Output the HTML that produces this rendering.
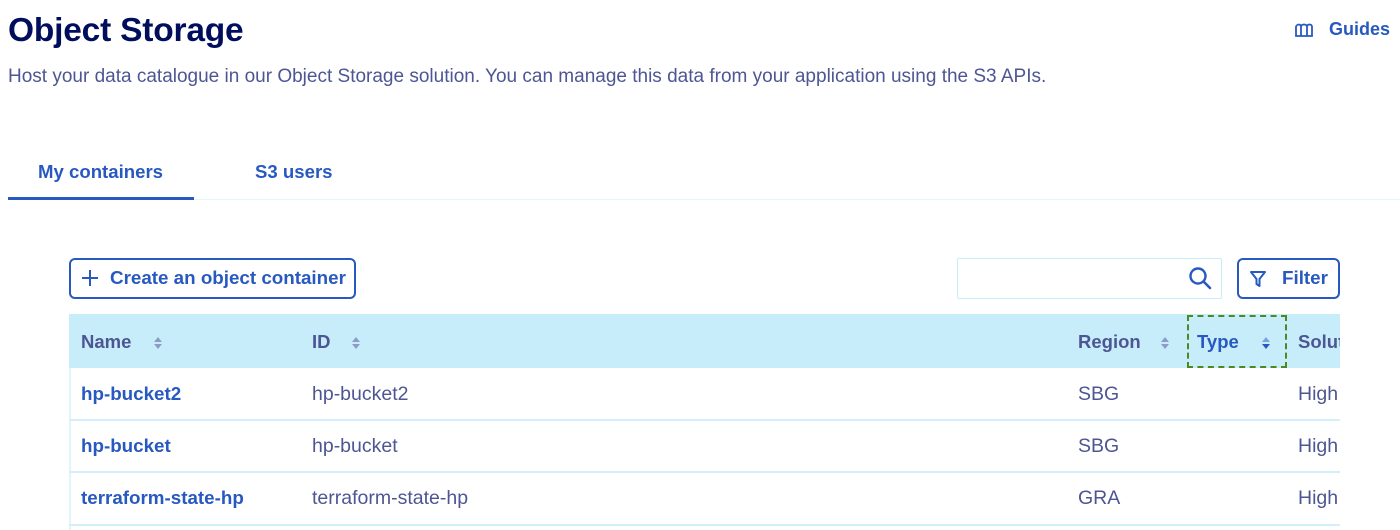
<!DOCTYPE html>
<html><head><meta charset="utf-8"><style>
*{margin:0;padding:0;box-sizing:border-box}
body{width:1400px;height:530px;background:#fff;font-family:"Liberation Sans",sans-serif;position:relative;overflow:hidden;color:#4d5693}
.a{position:absolute;white-space:nowrap}
h1{position:absolute;left:8px;top:12px;font-size:33.5px;font-weight:bold;color:#000e5c;letter-spacing:-0.2px}
.sub{left:8px;top:66px;font-size:19px;color:#4d5693}
.blue{color:#2859c0}
.tab{font-size:18.6px;font-weight:bold;color:#2859c0;top:161px}
.btn{border:2px solid #2859c0;border-radius:6px;background:#fff}
.th{font-size:18.5px;font-weight:bold;color:#4d5693;top:331px}
.td{font-size:19.5px;top:383px}
.td.blue{font-size:18.8px}
.sort{position:absolute;width:10px;height:16px}
</style></head><body>
<h1>Object Storage</h1>
<div class="a sub">Host your data catalogue in our Object Storage solution. You can manage this data from your application using the S3 APIs.</div>
<svg class="a" style="left:1295px;top:22px" width="18" height="16" viewBox="0 0 18 16"><path d="M1 4v10h16V4M1 4c2-2 4-2 5 0 1-2 5-2 6 0 1-2 4-2 5 0M6 4v10M12 4v10" fill="none" stroke="#2859c0" stroke-width="1.8"/></svg>
<div class="a blue" style="left:1329px;top:19px;font-size:18px;font-weight:bold">Guides</div>

<div class="a tab" style="left:38px">My containers</div>
<div class="a tab" style="left:255px">S3 users</div>
<div class="a" style="left:8px;top:199px;width:1392px;height:1px;background:#e6f4fb"></div>
<div class="a" style="left:8px;top:197px;width:186px;height:3px;background:#2859c0"></div>

<div class="a btn" style="left:69px;top:258px;width:287px;height:41px"></div>
<svg class="a" style="left:81px;top:269px" width="18" height="18"><path d="M9 1v16M1 9h16" stroke="#2859c0" stroke-width="2"/></svg>
<div class="a blue" style="left:110px;top:267px;font-size:18.8px;font-weight:bold">Create an object container</div>

<div class="a" style="left:957px;top:258px;width:265px;height:41px;border:1px solid #c8ecfa;border-radius:2px"></div>
<svg class="a" style="left:1188px;top:266px" width="26" height="26"><circle cx="10" cy="10" r="7.5" fill="none" stroke="#2859c0" stroke-width="2.4"/><path d="M15.5 15.5L22 22" stroke="#2859c0" stroke-width="2.6" stroke-linecap="round"/></svg>
<div class="a btn" style="left:1237px;top:258px;width:103px;height:41px"></div>
<svg class="a" style="left:1249px;top:270px" width="18" height="18"><path d="M2 2h14l-5.5 7v7l-3-2V9z" fill="none" stroke="#2859c0" stroke-width="2" stroke-linejoin="round"/></svg>
<div class="a blue" style="left:1282px;top:267px;font-size:18.8px;font-weight:bold">Filter</div>

<div class="a" style="left:69px;top:314px;width:1271px;height:54px;background:#c7edfb"></div>
<div class="a" style="left:69px;top:368px;width:2px;height:162px;background:#e0f4fc"></div>
<div class="a" style="left:69px;top:419px;width:1271px;height:2px;background:#d2effb"></div>
<div class="a" style="left:69px;top:471px;width:1271px;height:2px;background:#d2effb"></div>
<div class="a" style="left:69px;top:524px;width:1271px;height:2px;background:#d2effb"></div>

<div class="a th" style="left:81px">Name</div>
<div class="a th" style="left:312px">ID</div>
<div class="a th" style="left:1078px">Region</div>
<div class="a th" style="left:1197px;color:#2859c0">Type</div>
<div class="a th" style="left:1298px;width:42px;overflow:hidden">Solution</div>
<svg class="sort" style="left:153px;top:335px" viewBox="0 0 10 16"><path d="M1 7L5 2 9 7zM1 9l4 5 4-5z" fill="#8e9bc6"/></svg>
<svg class="sort" style="left:351px;top:335px" viewBox="0 0 10 16"><path d="M1 7L5 2 9 7zM1 9l4 5 4-5z" fill="#8e9bc6"/></svg>
<svg class="sort" style="left:1160px;top:335px" viewBox="0 0 10 16"><path d="M1 7L5 2 9 7zM1 9l4 5 4-5z" fill="#8e9bc6"/></svg>
<svg class="sort" style="left:1261px;top:335px" viewBox="0 0 10 16"><path d="M1 7L5 2 9 7z" fill="#7ea0e0"/><path d="M1 9l4 5 4-5z" fill="#2859c0"/></svg>
<div class="a" style="left:1187px;top:315px;width:100px;height:53px;border:2px dashed #4a8a1e"></div>

<div class="a td blue" style="font-weight:bold;left:81px">hp-bucket2</div>
<div class="a td" style="left:312px">hp-bucket2</div>
<div class="a td" style="left:1078px">SBG</div>
<div class="a td" style="left:1298px;width:42px;overflow:hidden">High</div>
<div class="a td blue" style="font-weight:bold;left:81px;top:435px">hp-bucket</div>
<div class="a td" style="left:312px;top:435px">hp-bucket</div>
<div class="a td" style="left:1078px;top:435px">SBG</div>
<div class="a td" style="left:1298px;top:435px;width:42px;overflow:hidden">High</div>
<div class="a td blue" style="font-weight:bold;left:81px;top:487px">terraform-state-hp</div>
<div class="a td" style="left:312px;top:487px">terraform-state-hp</div>
<div class="a td" style="left:1078px;top:487px">GRA</div>
<div class="a td" style="left:1298px;top:487px;width:42px;overflow:hidden">High</div>
</body></html>
